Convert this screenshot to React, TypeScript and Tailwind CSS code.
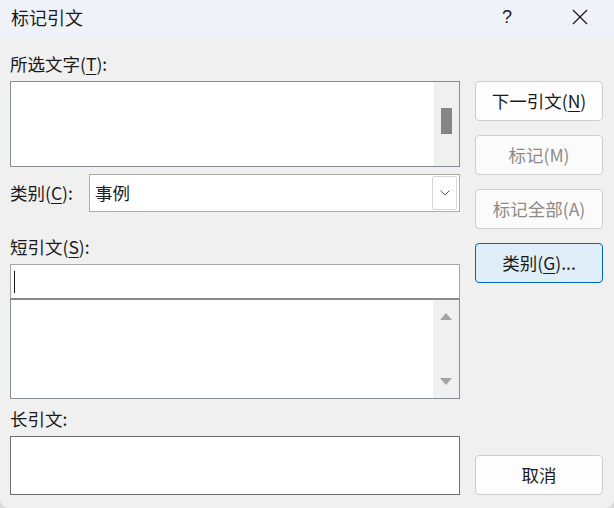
import React from 'react';

// 标记引文 对话框
const font = { fontFamily: '"Noto Sans CJK SC", "Noto Sans", sans-serif' };

function Btn({
  children,
  disabled,
  primary,
}: {
  children: React.ReactNode;
  disabled?: boolean;
  primary?: boolean;
}) {
  const cls = primary
    ? 'border-[#0067c0] bg-[#e0eef9] text-[#1a1a1a]'
    : disabled
    ? 'border-[#cfcfcf] bg-[#fbfbfb] text-[#8f8a86]'
    : 'border-[#cccccc] bg-[#fdfdfd] text-[#1a1a1a]';
  return (
    <div className={`h-[40px] w-[128px] rounded-[4px] border flex items-center justify-center text-[17.5px] ${cls}`}>
      {children}
    </div>
  );
}

function U({ children }: { children: React.ReactNode }) {
  return <span className="underline underline-offset-[3px] decoration-1">{children}</span>;
}

export default function App() {
  return (
    <div className="w-[614px] h-[508px] bg-[#d9d9d9] text-[#1a1a1a]" style={font}>
      <div className="w-full h-full flex flex-col rounded-b-[9px] overflow-hidden bg-[#f0f0f0]">
        {/* 标题栏 */}
        <div className="h-[38px] shrink-0 bg-[#eff3f9] flex items-center pl-[11px] text-[18px]">
          <span className="-mt-[4px]">标记引文</span>
          <span className="ml-auto mr-[60px] -mt-[4px] text-[18px]" style={{ fontFamily: '"Liberation Sans", sans-serif' }}>?</span>
          <svg width="16" height="16" viewBox="0 0 16 16" className="mr-[26px] -mt-[4px]">
            <path d="M1 1 L15 15 M15 1 L1 15" stroke="#1a1a1a" strokeWidth="1.3" fill="none" />
          </svg>
        </div>

        <div className="flex-1 flex px-[10px] pb-[14px]">
          {/* 左栏 */}
          <div className="w-[450px] flex flex-col text-[17.5px] leading-[24px]">
            <div className="mt-[14px] h-[24px]">
              所选文字(<U>T</U>):
            </div>
            <div className="mt-[5px] h-[86px] border border-[#878b94] bg-white flex justify-end">
              <div className="w-[25px] h-full bg-[#f0f0f0] flex justify-center pt-[26px]">
                <div className="w-[11px] h-[26px] bg-[#858585]" />
              </div>
            </div>

            <div className="mt-[7px] h-[38px] flex items-center">
              <span className="w-[79px]">
                类别(<U>C</U>):
              </span>
              <div className="flex-1 h-full border border-[#adadad] bg-white flex items-center pl-[5px] pr-[2px]">
                <span>事例</span>
                <div className="ml-auto w-[25px] h-[34px] border border-[#d6d6d6] rounded-[2px] bg-white flex items-center justify-center">
                  <svg width="10" height="6" viewBox="0 0 10 6">
                    <path d="M0.5 0.5 L5 5 L9.5 0.5" stroke="#5a5a5a" strokeWidth="1" fill="none" />
                  </svg>
                </div>
              </div>
            </div>

            <div className="mt-[23px] h-[24px]">
              短引文(<U>S</U>):
            </div>
            <div className="mt-[5px] h-[35px] border border-[#a6a6a6] border-b-[#8a8a8a] bg-white flex items-center pl-[3px]">
              <div className="w-[1px] h-[22px] bg-[#1a1a1a]" />
            </div>
            <div className="h-[100px] border border-[#878b94] bg-white flex justify-end">
              <div className="w-[26px] h-full bg-[#f0f0f0] flex flex-col items-center justify-between py-[13px]">
                <svg width="12" height="7" viewBox="0 0 12 7">
                  <path d="M6 0 L12 7 L0 7 Z" fill="#a3a3a3" />
                </svg>
                <svg width="12" height="7" viewBox="0 0 12 7">
                  <path d="M0 0 L12 0 L6 7 Z" fill="#a3a3a3" />
                </svg>
              </div>
            </div>

            <div className="mt-[8px] h-[24px]">长引文:</div>
            <div className="mt-[5px] h-[59px] border border-[#6e6e6e] bg-white" />
          </div>

          {/* 右栏按钮 */}
          <div className="ml-[15px] flex flex-col gap-[14px] pt-[43px]">
            <Btn>
              下一引文(<U>N</U>)
            </Btn>
            <Btn disabled>标记(M)</Btn>
            <Btn disabled>标记全部(A)</Btn>
            <Btn primary>
              类别(<U>G</U>)...
            </Btn>
            <div className="mt-auto">
              <Btn>取消</Btn>
            </div>
          </div>
        </div>
      </div>
    </div>
  );
}
